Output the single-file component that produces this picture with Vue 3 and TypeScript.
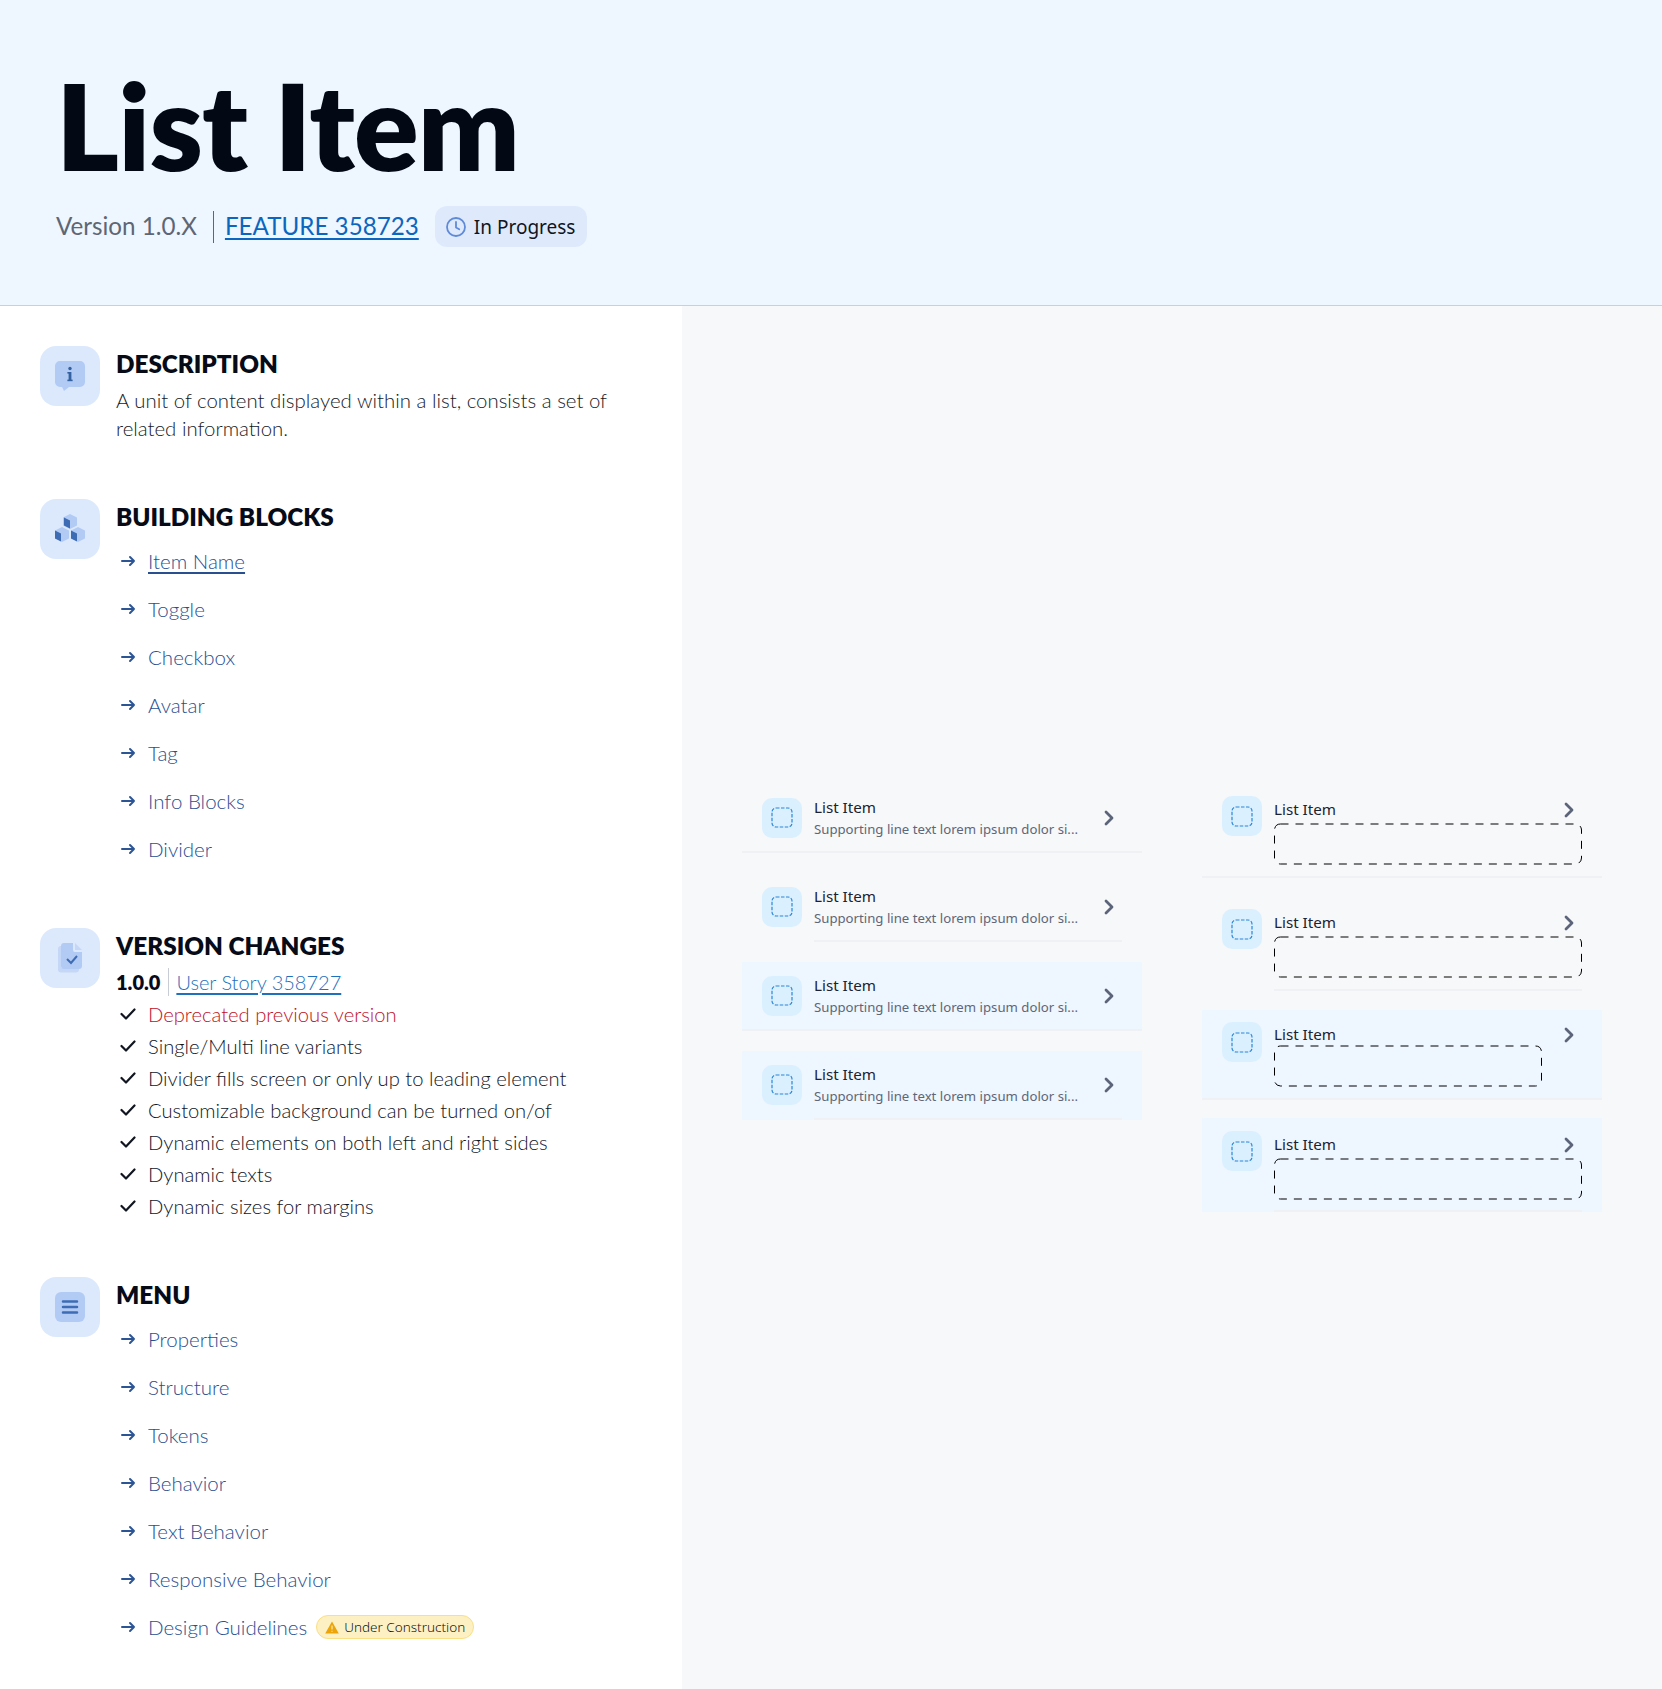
<script setup lang="ts">
const blocks: string[] = ['Item Name', 'Toggle', 'Checkbox', 'Avatar', 'Tag', 'Info Blocks', 'Divider']
const changes: { text: string; red?: boolean }[] = [
  { text: 'Deprecated previous version', red: true },
  { text: 'Single/Multi line variants' },
  { text: 'Divider fills screen or only up to leading element' },
  { text: 'Customizable background can be turned on/of' },
  { text: 'Dynamic elements on both left and right sides' },
  { text: 'Dynamic texts' },
  { text: 'Dynamic sizes for margins' }
]
const menu: string[] = ['Properties', 'Structure', 'Tokens', 'Behavior', 'Text Behavior', 'Responsive Behavior', 'Design Guidelines']
const simpleRows = [
  { cls: 'full' },
  { cls: 'inset' },
  { cls: 'full tinted' },
  { cls: 'inset tinted' }
]
const slotRows = [
  { cls: 'full slot-a', w: 308 },
  { cls: 'inset slot-a', w: 308 },
  { cls: 'full tinted slot-b', w: 268 },
  { cls: 'inset tinted slot-a last', w: 308 }
]
</script>

<template>
  <div class="page">
    <header class="hero">
      <h1 class="title">List Item</h1>
      <div class="meta">
        <span class="version">Version 1.0.X</span>
        <a class="feature">FEATURE 358723</a>
        <span class="pill">
          <svg width="22" height="22" viewBox="0 0 22 22" fill="none" stroke="#5f8ad8" stroke-width="1.8" stroke-linecap="round" stroke-linejoin="round"><circle cx="11" cy="11" r="9" /><path d="M11 6v5.5l3.2 1.8" /></svg>
          In Progress
        </span>
      </div>
    </header>

    <main class="main">
      <section class="left">
        <div class="sec s1">
          <div class="badge-icon">
            <svg width="30" height="30" viewBox="0 0 30 30"><path d="M5 0h20a5 5 0 0 1 5 5v16a5 5 0 0 1-5 5H14l-5 4-2-4H5a5 5 0 0 1-5-5V5a5 5 0 0 1 5-5z" fill="#b2cbf5" /><rect x="13.6" y="11" width="2.8" height="9" fill="#34619f" /><rect x="12.4" y="11" width="2" height="1.6" fill="#34619f" /><rect x="12.4" y="18.6" width="5.2" height="1.6" fill="#34619f" /><circle cx="15" cy="7.5" r="1.7" fill="#34619f" /></svg>
          </div>
          <div class="body">
            <h2>DESCRIPTION</h2>
            <p class="desc">A unit of content displayed within a list, consists a set of related information.</p>
          </div>
        </div>

        <div class="sec s2">
          <div class="badge-icon">
            <svg width="34" height="32" viewBox="0 0 34 32"><path d="M17 1l7 3.5v8L17 16l-7-3.5v-8z" fill="#b2cbf5" /><path d="M9 14l7 3.5v8L9 29l-7-3.500v-8z" fill="#b2cbf5" /><path d="M25 14l7 3.500v8L25 29l-7-3.500v-8z" fill="#b2cbf5" /><path d="M11 4.500l6 3v8l-6-3z" fill="#3e6cb4" /><path d="M2 17.500l6 3v8l-6-3z" fill="#3e6cb4" /><path d="M18 17.500l6 3v8l-6-3z" fill="#3e6cb4" /></svg>
          </div>
          <div class="body">
            <h2>BUILDING BLOCKS</h2>
            <ul class="links">
              <li v-for="(b, i) in blocks" :key="b">
                <svg class="arrow" width="15" height="12" viewBox="0 0 15 12" fill="none" stroke="#2c5596" stroke-width="2" stroke-linecap="round" stroke-linejoin="round"><path d="M1 6h12M9 2l4 4-4 4" /></svg>
                <span :class="{ under: i === 0 }">{{ b }}</span>
              </li>
            </ul>
          </div>
        </div>

        <div class="sec s3">
          <div class="badge-icon">
            <svg width="30" height="32" viewBox="0 0 30 32"><path d="M6 4v22h18v1.500a3 3 0 0 1-3 3H6a3 3 0 0 1-3-3V7a3 3 0 0 1 3-3z" fill="#c5d7f6" /><path d="M9 1h9v7a2 2 0 0 0 2 2h7v14a3 3 0 0 1-3 3H9a3 3 0 0 1-3-3V4a3 3 0 0 1 3-3z" fill="#b2cbf5" /><path d="M20 1l7 7h-7z" fill="#c5d7f6" /><path d="M12 17l4 4 6-7" fill="none" stroke="#3e6cb4" stroke-width="2" /></svg>
          </div>
          <div class="body">
            <h2>VERSION CHANGES</h2>
            <div class="ver-line"><strong>1.0.0</strong><a class="story">User Story 358727</a></div>
            <ul class="checks">
              <li v-for="c in changes" :key="c.text" :class="{ red: c.red }">
                <svg class="check" width="16" height="12" viewBox="0 0 16 12" fill="none" stroke="#10151f" stroke-width="2.200" stroke-linecap="round" stroke-linejoin="round"><path d="M1.500 6l4.500 4.500L14.500 1.500" /></svg>
                <span>{{ c.text }}</span>
              </li>
            </ul>
          </div>
        </div>

        <div class="sec">
          <div class="badge-icon">
            <svg width="30" height="30" viewBox="0 0 30 30"><rect width="30" height="30" rx="6" fill="#b2cbf5" /><path d="M8 9.500h14M8 15h14M8 20.500h14" stroke="#3e6cb4" stroke-width="2.500" stroke-linecap="round" /></svg>
          </div>
          <div class="body">
            <h2>MENU</h2>
            <ul class="links">
              <li v-for="m in menu" :key="m">
                <svg class="arrow" width="15" height="12" viewBox="0 0 15 12" fill="none" stroke="#2c5596" stroke-width="2" stroke-linecap="round" stroke-linejoin="round"><path d="M1 6h12M9 2l4 4-4 4" /></svg>
                <span>{{ m }}</span>
                <span v-if="m === 'Design Guidelines'" class="warn">
                  <svg width="14" height="13" viewBox="0 0 14 13"><path d="M7 .5l6.800 12H.2z" fill="#eba40a" /><path d="M7 4.500v4M7 9.700v1" stroke="#fdf1c4" stroke-width="1.100" /></svg>
                  Under Construction
                </span>
              </li>
            </ul>
          </div>
        </div>
      </section>

      <section class="right">
        <div class="stack simple">
          <div v-for="(r, i) in simpleRows" :key="i" class="row" :class="r.cls">
            <div class="lead">
              <svg width="22" height="21" viewBox="0 0 22 21" fill="none"><rect x="1" y="1" width="20" height="19" rx="4" stroke="#2a86d8" stroke-width="1.200" stroke-dasharray="3.500 1.500" /></svg>
            </div>
            <div class="txt">
              <div class="name">List Item</div>
              <div class="sub">Supporting line text lorem ipsum dolor si...</div>
            </div>
            <svg class="chev" width="11" height="16" viewBox="0 0 11 16" fill="none" stroke="#5b6478" stroke-width="2.800" stroke-linecap="round" stroke-linejoin="round"><path d="M2 2l6 6-6 6" /></svg>
          </div>
        </div>

        <div class="stack slotted">
          <div v-for="(r, i) in slotRows" :key="i" class="row s" :class="r.cls">
            <div class="lead">
              <svg width="22" height="21" viewBox="0 0 22 21" fill="none"><rect x="1" y="1" width="20" height="19" rx="4" stroke="#2a86d8" stroke-width="1.200" stroke-dasharray="3.500 1.500" /></svg>
            </div>
            <div class="txt">
              <div class="name">List Item</div>
              <svg class="dash" :width="r.w" height="40" :viewBox="`0 0 ${r.w} 40`" fill="none"><rect x=".5" y="0" :width="r.w - 1" height="40" rx="6" stroke="#000" stroke-dasharray="8 7" /></svg>
            </div>
            <svg class="chev" width="11" height="16" viewBox="0 0 11 16" fill="none" stroke="#5b6478" stroke-width="2.800" stroke-linecap="round" stroke-linejoin="round"><path d="M2 2l6 6-6 6" /></svg>
          </div>
        </div>
      </section>
    </main>
  </div>
</template>

<style scoped>
.page {
  width: 1662px;
  height: 1689px;
  display: flex;
  flex-direction: column;
  font-family: "Lato", "Noto Sans", sans-serif;
  color: #1d2230;
  overflow: hidden;
}
.hero {
  height: 306px;
  box-sizing: border-box;
  flex: none;
  background: #eef6ff;
  border-bottom: 1px solid #b9d2f5;
  padding: 55px 0 0 56px;
}
.title {
  margin: 0;
  font-size: 120px;
  line-height: 140px;
  font-weight: 800;
  letter-spacing: -0.8px;
  color: #020814;
}
.meta {
  display: flex;
  align-items: center;
  margin-top: 11px;
  height: 41px;
}
.version {
  font-size: 24.2px;
  color: #5d6675;
  padding: 0 16px 2px 0;
  border-right: 1px solid #5d6675;
  line-height: 30px;
}
.feature {
  font-size: 24.2px;
  color: #0b66c0;
  text-decoration: underline;
  text-underline-offset: 3px;
  margin-left: 11px;
  padding-bottom: 2px;
}
.pill {
  display: flex;
  align-items: center;
  gap: 7px;
  height: 41px;
  padding: 0 12px 0 10px;
  margin-left: 16px;
  border-radius: 12px;
  background: #deeafc;
  font-family: "Noto Sans", sans-serif;
  font-size: 19px;
  color: #10151f;
}
.main {
  flex: 1;
  display: flex;
  min-height: 0;
}
.left {
  width: 682px;
  flex: none;
  box-sizing: border-box;
  background: #fff;
  padding: 40px 0 0 40px;
}
.sec {
  display: flex;
  gap: 16px;
}
.s1 {
  margin-bottom: 56px;
}
.s2 {
  margin-bottom: 55px;
}
.s3 {
  margin-bottom: 55px;
}
.badge-icon {
  width: 60px;
  height: 60px;
  flex: none;
  border-radius: 16px;
  background: #dce9fd;
  display: flex;
  align-items: center;
  justify-content: center;
}
.body {
  width: 500px;
}
h2 {
  margin: 0;
  font-size: 24.3px;
  line-height: 34px;
  padding: 1px 0;
  font-weight: 800;
  color: #060b17;
}
.desc {
  margin: 4px 0 1px;
  font-size: 20.4px;
  line-height: 28px;
  font-weight: 300;
  color: #151a26;
}
.links {
  list-style: none;
  margin: 2px 0 0;
  padding: 0;
}
.links li {
  display: flex;
  align-items: center;
  height: 48px;
  font-size: 20.5px;
  font-weight: 300;
  color: #2a4f90;
}
.arrow {
  margin: 0 12px 0 5px;
  flex: none;
}
.under {
  text-decoration: underline;
  text-underline-offset: 3px;
}
.ver-line {
  display: flex;
  align-items: center;
  box-sizing: border-box;
  height: 34px;
  padding-top: 2px;
  font-size: 20px;
}
.ver-line strong {
  font-weight: 800;
  color: #060b17;
  padding-right: 8px;
  border-right: 1px solid #c8ccd4;
  line-height: 28px;
}
.story {
  margin-left: 7px;
  color: #1f70bd;
  font-weight: 300;
  text-decoration: underline;
  text-underline-offset: 3px;
}
.checks {
  list-style: none;
  margin: 0;
  padding: 0;
}
.checks li {
  display: flex;
  align-items: center;
  height: 32px;
  font-size: 20.2px;
  font-weight: 300;
  color: #10151f;
}
.checks li.red {
  color: #c0101f;
}
.check {
  margin: 0 12px 0 4px;
  flex: none;
}
.warn {
  display: inline-flex;
  align-items: center;
  gap: 5px;
  height: 24px;
  box-sizing: border-box;
  margin-left: 9px;
  padding: 0 8px;
  border: 1px solid #fbdf85;
  border-radius: 12px;
  background: #fdf1c4;
  color: #10151f;
  font-family: "Noto Sans", sans-serif;
  font-size: 13.5px;
}
.right {
  flex: 1;
  background: #f7f8fa;
  display: flex;
  align-items: center;
  padding-left: 60px;
  gap: 60px;
}
.stack {
  width: 400px;
  display: flex;
  flex-direction: column;
  font-family: "Noto Sans", sans-serif;
}
.simple {
  gap: 20px;
  margin-bottom: 92px;
}
.slotted {
  gap: 18px;
}
.row {
  position: relative;
  display: flex;
  align-items: flex-start;
  box-sizing: border-box;
  height: 69px;
  padding: 14px 0 0 20px;
}
.row.tinted {
  background: #eef6ff;
}
.row.full::after,
.row.inset::after {
  content: "";
  position: absolute;
  height: 2px;
  bottom: 0;
  background: #f0f1f4;
}
.row.full::after {
  left: 0;
  right: 0;
}
.row.inset::after {
  left: 72px;
  right: 20px;
}
.lead {
  width: 40px;
  height: 40px;
  flex: none;
  border-radius: 10px;
  background: #dbf0ff;
  display: flex;
  align-items: center;
  justify-content: center;
}
.txt {
  margin: -2px 0 0 12px;
  width: 290px;
  flex: none;
}
.name {
  font-size: 15.2px;
  line-height: 22px;
  margin-bottom: 1px;
  color: #1d2230;
}
.sub {
  font-size: 13.2px;
  line-height: 20px;
  color: #5e6678;
}
.chev {
  position: absolute;
  right: 27px;
  top: 26px;
}
.row.s {
  height: 95px;
  padding-top: 13px;
}
.row.s .txt {
  width: 308px;
  margin-top: 0;
  padding-top: 2px;
}
.row.s .name {
  margin-bottom: 4px;
}
.dash {
  display: block;
  overflow: visible;
}
.row.s .chev {
  top: 19px;
}
.row.slot-b {
  height: 90px;
  padding-top: 12px;
  margin-top: 1px;
}
.row.slot-b .txt {
  padding-top: 1px;
}
.row.slot-b .name {
  margin-bottom: 1px;
}
.row.slot-b .chev {
  top: 17px;
}
.row.last {
  height: 94px;
}
</style>
